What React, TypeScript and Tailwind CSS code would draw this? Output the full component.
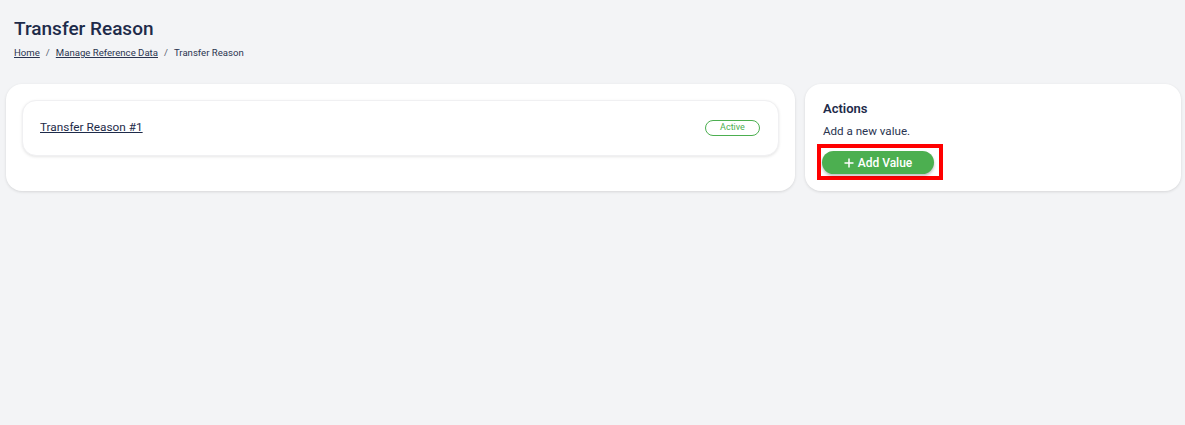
import React from 'react';

export default function App() {
  return (
    <div
      className="min-h-[425px] bg-[#f3f4f6] pl-[6px] pr-[4px] text-[#1e2b4a]"
      style={{ fontFamily: 'Roboto, "Liberation Sans", sans-serif' }}>
      {/* Header */}
      <div className="pl-[8px] pt-[16px]">
        <h1 className="text-[19px] font-medium leading-[26px] text-[#1e2b4a]">Transfer Reason</h1>
        <nav className="mt-[4px] flex items-center gap-[6px] text-[9.6px] leading-[14px] text-[#2a3450]">
          <a href="#" className="underline">Home</a>
          <span className="text-[#555c6e]">/</span>
          <a href="#" className="underline">Manage Reference Data</a>
          <span className="text-[#555c6e]">/</span>
          <span>Transfer Reason</span>
        </nav>
      </div>

      <div className="mt-[24px] flex gap-[10px]">
        {/* Values list */}
        <div className="h-[107px] flex-1 rounded-[16px] bg-white p-[16px] shadow-[0_1px_3px_rgba(0,0,0,0.12)]">
          <div className="flex h-[56px] items-center justify-between rounded-[14px] border border-[#f0f0f2] bg-white pl-[17px] pr-[18px] shadow-[0_1px_3px_rgba(0,0,0,0.10)]">
            <a href="#" className="text-[11.8px] text-[#1e2b4a] underline">Transfer Reason #1</a>
            <span className="flex h-[16px] w-[55px] items-center justify-center rounded-full border border-[#4caf50] text-[9px] text-[#4caf50]">
              Active
            </span>
          </div>
        </div>

        {/* Actions */}
        <div className="h-[107px] w-[376px] rounded-[16px] bg-white pl-[18px] pt-[17px] shadow-[0_1px_3px_rgba(0,0,0,0.12)]">
          <h2 className="text-[13px] font-semibold leading-[16px] text-[#1e2b4a]">Actions</h2>
          <p className="mt-[6px] text-[11.6px] leading-[16px] text-[#2a3450]">Add a new value.</p>
          <div className="ml-[-6px] mt-[5px] w-[126px] border-[4px] border-[#ff0000] pb-[2px] pl-[1px] pr-[5px] pt-[3px]">
            <button className="flex h-[23px] w-[112px] items-center justify-center gap-[4px] rounded-full bg-[#4caf50] text-[12px] font-medium text-white shadow-[0_2px_3px_rgba(0,0,0,0.25)]">
              <svg width="10" height="10" viewBox="0 0 10 10" fill="none" stroke="white" strokeWidth="1.5">
                <path d="M5 0.5v9M0.5 5h9" />
              </svg>
              Add Value
            </button>
          </div>
        </div>
      </div>
    </div>
  );
}
